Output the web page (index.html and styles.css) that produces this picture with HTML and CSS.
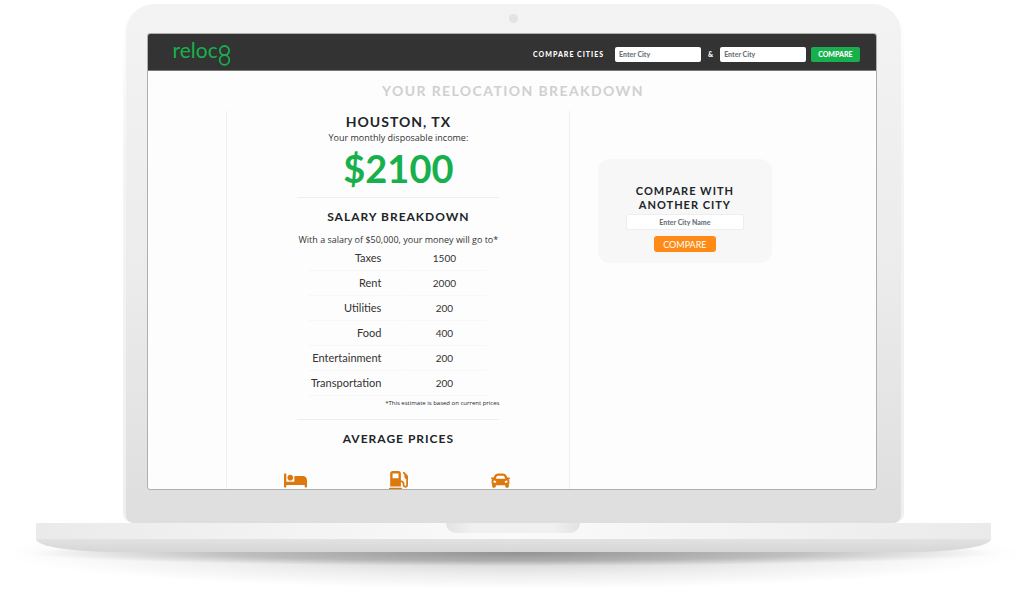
FILE: index.html
```html
<!DOCTYPE html>
<html lang="en">
<head>
<meta charset="utf-8">
<meta name="viewport" content="width=device-width, initial-scale=1">
<title>Reloc8 – Your Relocation Breakdown</title>
<link rel="stylesheet" href="styles.css">
</head>
<body>
<div class="laptop">
  <div class="lid">
    <div class="bezel">
      <span class="camera"></span>
      <div class="screen">
        <header class="topbar">
          <a class="logo" href="#" aria-label="reloc8">reloc<svg class="logo-mark" viewBox="0 0 12 26" aria-hidden="true"><circle cx="6.500" cy="8.600" r="4.600"/><circle cx="6.500" cy="18" r="4.800"/></svg></a>
          <form class="compare-form">
            <label class="compare-label" for="city-a">COMPARE CITIES</label>
            <input class="city-input" id="city-a" type="text" placeholder="Enter City">
            <label class="amp" for="city-b">&amp;</label>
            <input class="city-input" id="city-b" type="text" placeholder="Enter City">
            <button class="go" type="button">COMPARE</button>
          </form>
        </header>
        <main class="page">
          <h1 class="page-title">YOUR RELOCATION BREAKDOWN</h1>
          <div class="columns">
            <section class="city">
              <h2 class="city-name">HOUSTON, TX</h2>
              <p class="note">Your monthly disposable income:</p>
              <p class="income">$2100</p>
              <hr class="rule">
              <h3 class="section-title">SALARY BREAKDOWN</h3>
              <p class="note salary-note">With a salary of $50,000, your money will go to*</p>
              <table class="costs">
                <tr><th scope="row">Taxes</th><td>1500</td></tr>
                <tr><th scope="row">Rent</th><td>2000</td></tr>
                <tr><th scope="row">Utilities</th><td>200</td></tr>
                <tr><th scope="row">Food</th><td>400</td></tr>
                <tr><th scope="row">Entertainment</th><td>200</td></tr>
                <tr><th scope="row">Transportation</th><td>200</td></tr>
              </table>
              <p class="footnote">*This estimate is based on current prices</p>
              <hr class="rule">
              <h3 class="section-title">AVERAGE PRICES</h3>
              <div class="prices">
                <svg class="icon icon-bed" viewBox="0 0 640 512" role="img" aria-label="Housing"><path d="M176 256c44.11 0 80-35.89 80-80s-35.89-80-80-80-80 35.89-80 80 35.89 80 80 80zm352-128H304c-8.84 0-16 7.16-16 16v144H64V80c0-8.84-7.16-16-16-16H16C7.16 64 0 71.16 0 80v352c0 8.84 7.16 16 16 16h32c8.84 0 16-7.16 16-16v-48h512v48c0 8.84 7.16 16 16 16h32c8.84 0 16-7.16 16-16V240c0-61.86-50.14-112-112-112z"/></svg>
                <svg class="icon" viewBox="0 0 512 512" role="img" aria-label="Gas"><path d="M336 448H16c-8.800 0-16 7.200-16 16v32c0 8.800 7.200 16 16 16h320c8.800 0 16-7.200 16-16v-32c0-8.800-7.200-16-16-16zm157.200-340.700l-81-81c-6.200-6.200-16.400-6.200-22.600 0l-11.300 11.300c-6.200 6.200-6.200 16.400 0 22.600L416 97.900V160c0 28.100 20.900 51.300 48 55.200V376c0 13.200-10.800 24-24 24s-24-10.800-24-24v-32c0-48.600-39.400-88-88-88h-8V64c0-35.300-28.700-64-64-64H96C60.700 0 32 28.700 32 64v352h288V304h8c22.100 0 40 17.900 40 40v27.800c0 37.700 27 72 64.500 75.900 43 4.300 79.500-29.500 79.500-71.700V152.600c0-17-6.800-33.300-18.800-45.300zM256 192H96V64h160v128z"/></svg>
                <svg class="icon" viewBox="0 0 512 512" role="img" aria-label="Car"><path d="M499.990 176h-59.870l-16.640-41.600C406.380 91.630 365.570 64 319.500 64h-127c-46.060 0-86.880 27.630-103.990 70.400L71.870 176H12.010C4.200 176-1.530 183.340.37 190.910l6 24C7.700 220.250 12.500 224 18.010 224h20.070C24.650 235.730 16 252.780 16 272v48c0 16.120 6.160 30.670 16 41.930V416c0 17.670 14.330 32 32 32h32c17.670 0 32-14.330 32-32v-32h256v32c0 17.670 14.330 32 32 32h32c17.670 0 32-14.330 32-32v-54.070c9.840-11.250 16-25.800 16-41.930v-48c0-19.220-8.650-36.270-22.070-48H494c5.510 0 10.310-3.750 11.640-9.090l6-24c1.890-7.570-3.840-14.910-11.650-14.910zm-352.060-17.830c7.290-18.220 24.940-30.170 44.570-30.170h127c19.630 0 37.280 11.950 44.570 30.170L384 208H128l19.930-49.830zM96 319.800c-19.200 0-32-12.760-32-31.900S76.800 256 96 256s48 28.710 48 47.850-28.800 15.950-48 15.950zm320 0c-19.200 0-48 3.190-48-15.950S396.800 256 416 256s32 12.760 32 31.900-12.800 31.900-32 31.900z"/></svg>
              </div>
            </section>
            <aside class="side">
              <form class="card">
                <label class="card-title" for="other-city">COMPARE WITH ANOTHER CITY</label>
                <input class="card-input" id="other-city" type="text" placeholder="Enter City Name">
                <button class="card-button" type="button">COMPARE</button>
              </form>
            </aside>
          </div>
        </main>
      </div>
    </div>
  </div>
  <div class="base">
    <div class="deck"><span class="notch"></span></div>
    <div class="underside"></div>
    <svg class="shadow" viewBox="0 0 1024 56" preserveAspectRatio="none" aria-hidden="true">
      <defs>
        <radialGradient id="wide"><stop offset="0" stop-color="#000" stop-opacity=".22"/><stop offset=".6" stop-color="#000" stop-opacity=".07"/><stop offset="1" stop-color="#000" stop-opacity="0"/></radialGradient>
        <radialGradient id="near"><stop offset="0" stop-color="#000" stop-opacity=".26"/><stop offset=".6" stop-color="#000" stop-opacity=".18"/><stop offset="1" stop-color="#000" stop-opacity="0"/></radialGradient>
      </defs>
      <ellipse cx="512" cy="18" rx="512" ry="36" fill="url(#wide)"/>
      <ellipse cx="512" cy="18" rx="490" ry="13" fill="url(#near)"/>
    </svg>
  </div>
</div>
</body>
</html>
```
FILE: styles.css
```css
* { box-sizing: border-box; }

body {
  margin: 0;
  background: #fff;
  color: #212529;
  font-family: Lato, "Open Sans", sans-serif;
}

h1, h2, h3, p { margin: 0; }
input, button { font-family: inherit; }

.laptop { padding: 4px 0 0 3px; }

/* Lid */
.lid {
  width: 76.4%;
  margin: 0 auto;
  padding: 0 3px;
  background: linear-gradient(#fff 0, #f4f4f4 30%, #efefef);
  border-radius: 30px 30px 10px 10px;
}

.bezel {
  position: relative;
  padding: 29px 24px 33px 21px;
  background: linear-gradient(#f3f3f3, #ececec 50%, #dedede);
  border-radius: 28px 28px 8px 8px;
}

.camera {
  position: absolute;
  top: 10px;
  left: 50%;
  width: 9px;
  height: 9px;
  margin-left: -5px;
  border-radius: 50%;
  background: #e3e3e3;
}

.screen {
  aspect-ratio: 729 / 457;
  border: 1px solid #adb0ad;
  border-radius: 3px;
  background: #fdfdfd;
  overflow: hidden;
}

/* Top bar */
.topbar {
  display: flex;
  align-items: center;
  justify-content: space-between;
  height: 37px;
  padding: 0 16px 0 24px;
  background: #333;
  border-bottom: 1px solid #777;
}

.logo {
  display: flex;
  align-items: flex-start;
  color: #17b04c;
  font-size: 21px;
  line-height: 25px;
  text-decoration: none;
}

.logo-mark {
  width: 12px;
  height: 26px;
  margin-top: 5px;
  fill: none;
  stroke: #17b04c;
  stroke-width: 1.8;
}

.compare-form {
  display: flex;
  align-items: center;
  margin-top: 4px;
  color: #fff;
  font-size: 7px;
  font-weight: 900;
}

.compare-label { margin-right: 11px; letter-spacing: 1px; }

.city-input {
  width: 86px;
  height: 15px;
  padding: 0 4px;
  border: 0;
  border-radius: 2px;
  background: #fff;
  font-size: 7px;
  font-weight: 900;
}

.amp { margin: 0 7px; }

.city-input::placeholder, .card-input::placeholder { color: #6c757d; opacity: 1; }

.go {
  height: 15px;
  margin-left: 5px;
  padding: 0 7px;
  border: 0;
  border-radius: 2px;
  background: #17b04c;
  color: #fff;
  font-size: 7px;
  font-weight: 900;
}

/* Page */
.page { padding: 10px 76px 0 78px; }

.page-title {
  color: #d0d0d0;
  font-size: 14px;
  line-height: 20px;
  letter-spacing: 0.1em;
  text-align: center;
}

.columns {
  display: grid;
  grid-template-columns: 3fr 2fr;
  margin-top: 10px;
}

.city {
  display: flex;
  flex-direction: column;
  align-items: center;
  border-left: 1px solid #eee;
  border-right: 1px solid #eee;
  text-align: center;
}

.city-name { font-size: 14px; line-height: 21px; letter-spacing: 1px; }

.note {
  color: #333;
  font-family: "Open Sans", sans-serif;
  font-size: 9px;
  line-height: 12px;
}

.income { color: #17b04c; font-size: 38px; font-weight: 700; line-height: 49px; }

.rule {
  width: 202px;
  margin: 4px 0 9px;
  border: 0;
  border-top: 1px solid #eee;
}

.section-title { font-size: 12px; line-height: 20px; letter-spacing: 1px; }
.salary-note { margin-top: 7px; }

.costs { width: 180px; border-collapse: separate; border-spacing: 1px 0; }

.costs th, .costs td {
  height: 25px;
  padding: 0;
  border-bottom: 1px solid #f7f7f7;
  color: #333;
  font-size: 10px;
  line-height: 20px;
  text-align: center;
}

.costs th {
  width: 91px;
  padding-right: 19px;
  font-size: 11px;
  font-weight: 400;
  text-align: right;
}

.footnote {
  width: 202px;
  margin-bottom: 5px;
  font-family: "Open Sans", sans-serif;
  font-size: 6px;
  line-height: 14px;
  text-align: right;
}

.prices {
  display: grid;
  grid-template-columns: repeat(3, 1fr);
  justify-items: center;
  align-items: center;
  width: 90%;
  margin-top: 22px;
}

.icon { width: 19px; height: 19px; fill: #dc780c; }
.icon-bed { width: 23px; }

/* Side card */
.side { padding: 48px 28px 0; }

.card {
  display: flex;
  flex-direction: column;
  align-items: center;
  padding: 25px 28px 11px;
  border-radius: 12px;
  background: #f7f7f7;
}

.card-title {
  font-size: 11px;
  font-weight: 700;
  line-height: 14px;
  letter-spacing: 1px;
  text-align: center;
}

.card-input {
  width: 100%;
  height: 16px;
  margin: 2px 0 6px;
  border: 1px solid #eee;
  border-radius: 2px;
  background: #fff;
  font-size: 7px;
  font-weight: 900;
  text-align: center;
}

.card-button {
  height: 16px;
  padding: 0 9px;
  border: 0;
  border-radius: 3px;
  background: #ff8a15;
  color: #fff;
  font-size: 9px;
}

/* Base */
.deck {
  position: relative;
  z-index: 1;
  display: flex;
  justify-content: center;
  width: 93.6%;
  height: 16px;
  margin: 0 auto;
  background: linear-gradient(90deg, #eaeaea, #f4f4f4 30%, #fafafa 50%, #f4f4f4 70%, #eaeaea);
}

.notch {
  width: 134px;
  height: 10px;
  border-radius: 0 0 10px 10px;
  background: linear-gradient(90deg, #e2e2e2, #f0f0f0 20%, #f0f0f0 80%, #e2e2e2);
}

.underside {
  position: relative;
  z-index: 1;
  width: 93.6%;
  height: 13px;
  margin: 0 auto;
  border-radius: 0 0 80px 80px / 0 0 13px 13px;
  background: linear-gradient(#e2e2e2, #d6d6d6);
}

.shadow {
  display: block;
  width: 100%;
  height: 56px;
  margin-top: -17px;
}
```
